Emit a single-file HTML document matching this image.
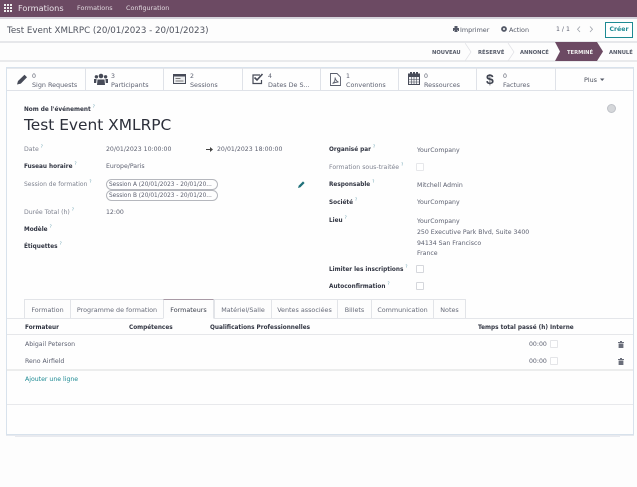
<!DOCTYPE html>
<html><head><meta charset="utf-8">
<style>
html,body{margin:0;padding:0;background:#fdfdfd;}
#r{position:relative;width:637px;height:487px;overflow:hidden;background:#fdfdfd;font-family:"DejaVu Sans","Liberation Sans",sans-serif;color:#4c5060;filter:blur(.35px);}
.t{position:absolute;white-space:nowrap;font-size:6.2px;line-height:10px;color:#5c6070;margin-top:1px;}
.t.n{margin-top:0;}
.b{font-weight:bold;color:#2f3340;font-size:5.75px;}
.g{color:#7f8390;}
.a{position:absolute;}
sup{font-size:4px;color:#6aa0b0;line-height:0;margin-left:2px;vertical-align:3px;font-weight:normal;}
.cb{position:absolute;width:6px;height:6px;border:1px solid #d5d7dc;background:#fff;border-radius:1px;}
.v{position:absolute;top:67px;width:1px;height:24px;background:#dfe2e8;}
.tab{position:absolute;top:299px;height:19px;border:1px solid #e2e4e8;border-bottom:none;box-sizing:border-box;font-size:6.4px;line-height:20px;text-align:center;color:#666a78;white-space:nowrap;background:#fdfdfd;}
</style></head><body><div id="r">
<!-- navbar -->
<div class="a" style="left:0;top:0;width:637px;height:17px;background:#6c4a63;"></div>
<div class="a" style="left:0;top:17px;width:637px;height:2px;background:#d6d4dc;"></div>
<svg class="a" style="left:4px;top:4px" width="8" height="8"><g fill="#eee"><rect x="0" y="0" width="2" height="2"/><rect x="3" y="0" width="2" height="2"/><rect x="6" y="0" width="2" height="2"/><rect x="0" y="3" width="2" height="2"/><rect x="3" y="3" width="2" height="2"/><rect x="6" y="3" width="2" height="2"/><rect x="0" y="6" width="2" height="2"/><rect x="3" y="6" width="2" height="2"/><rect x="6" y="6" width="2" height="2"/></g></svg>
<div class="t n" style="left:18px;top:2px;color:#e8e2e8;font-size:8.2px;line-height:12px;">Formations</div>
<div class="t n" style="left:77px;top:3px;color:#e0d8de;font-size:6.4px;">Formations</div>
<div class="t n" style="left:126px;top:3px;color:#e0d8de;font-size:6.4px;">Configuration</div>
<!-- control panel -->
<div class="t" style="left:7px;top:24px;font-size:8.7px;line-height:13px;color:#50545f;">Test Event XMLRPC (20/01/2023 - 20/01/2023)</div>
<div class="a" style="left:0;top:41px;width:637px;height:2px;background:#e6e7ea;"></div>
<svg class="a" style="left:453px;top:26px" width="6" height="6"><path d="M1.500 0h3v2h-3zM0 2h6v3H5V4H1v1H0zM1.500 4h3v2h-3z" fill="#555a68"/></svg>
<div class="t" style="left:460px;top:24px;color:#555a68;font-size:6.4px;">Imprimer</div>
<svg class="a" style="left:501px;top:26px" width="6" height="6"><circle cx="3" cy="3" r="2.900" fill="#555a68"/><circle cx="3" cy="3" r="1" fill="#fff"/></svg>
<div class="t" style="left:509px;top:24px;color:#555a68;font-size:6.4px;">Action</div>
<div class="t" style="left:556px;top:24px;">1 / 1</div>
<svg class="a" style="left:576px;top:26px" width="20" height="7" fill="none" stroke="#a0a4ac" stroke-width=".8"><path d="M4 .5L1.500 3.300 4 6M14 .5l2.500 2.800L14 6"/></svg>
<div class="a" style="left:605px;top:22px;width:28px;height:16px;border:1px solid #1d8a93;box-sizing:border-box;background:#fff;color:#1d8a93;font-size:6.200px;line-height:14px;text-align:center;font-weight:bold;">Créer</div>
<!-- statusbar -->
<div class="a" style="left:0;top:60px;width:637px;height:2px;background:#e9eaec;"></div>
<div class="t b" style="left:432px;top:47px;font-size:5.200px;color:#555a68;">NOUVEAU</div>
<div class="t b" style="left:478px;top:47px;font-size:5.200px;color:#555a68;">RÉSERVÉ</div>
<div class="t b" style="left:520px;top:47px;font-size:5.200px;color:#555a68;">ANNONCÉ</div>
<svg class="a" style="left:465px;top:43px" width="120" height="18" fill="none" stroke="#e0e1e5" stroke-width=".7"><path d="M0 0l6 9-6 9M43 0l6 9-6 9"/></svg>
<svg class="a" style="left:555px;top:42px" width="49" height="19"><path d="M0 0H42L48 9.500 42 19H0L5 9.500z" fill="#6c4a63"/></svg>
<div class="t b" style="left:567px;top:47px;font-size:5.200px;color:#eee;">TERMINÉ</div>
<div class="t b" style="left:609px;top:47px;font-size:5.200px;color:#555a68;">ANNULÉ</div>
<!-- sheet -->
<div class="a" style="left:6px;top:67px;width:628px;height:368px;border:1px solid #d8e2ec;box-sizing:border-box;background:#fefefe;box-shadow:0 1px 0 #e6e9ef;"></div>
<div class="a" style="left:15px;top:435px;width:605px;height:2px;background:#e8eaef;"></div>
<!-- stat buttons -->
<div class="a" style="left:7px;top:90px;width:626px;height:1px;background:#dfe2e8;"></div>
<div class="a" style="left:7px;top:68px;width:626px;height:1px;background:#e6e8ec;"></div>
<div class="v" style="left:85px"></div><div class="v" style="left:163px"></div><div class="v" style="left:242px"></div><div class="v" style="left:320px"></div><div class="v" style="left:398px"></div><div class="v" style="left:476px"></div><div class="v" style="left:555px"></div>
<svg class="a" style="left:17px;top:74px" width="11" height="11"><path d="M0 10.500L1 7 7.500 .8 10 3.200 3.800 9.600z" fill="#474b58"/></svg>
<svg class="a" style="left:94px;top:73px" width="14" height="13" fill="#474b58"><circle cx="7" cy="3" r="2.300"/><circle cx="2.400" cy="3.800" r="1.700"/><circle cx="11.600" cy="3.800" r="1.700"/><path d="M3.500 6.500h7l.5 5.500H3zM0 6h2.600L2.200 10H0zM11.400 6H14v4h-2.200z"/></svg>
<svg class="a" style="left:173px;top:74px" width="13" height="11"><rect x=".5" y=".5" width="12" height="9" fill="#eceef0" stroke="#474b58"/><rect x=".5" y=".5" width="12" height="2" fill="#474b58"/><rect x="2.500" y="4" width="5" height="1" fill="#777"/><rect x="2.500" y="6.500" width="8" height="1" fill="#777"/></svg>
<svg class="a" style="left:252px;top:73px" width="12" height="12" fill="none"><path d="M9.500 7v3.500h-8.500v-8.500h7" stroke="#474b58" stroke-width="1.200"/><path d="M2.500 4.500l2.500 2.500 5.500-6" stroke="#474b58" stroke-width="1.600"/></svg>
<svg class="a" style="left:330px;top:73px" width="11" height="13" fill="none" stroke="#5a5e6c" stroke-width=".9"><path d="M.5.500h6.500l3.500 3.500v8.500h-10z"/><path d="M2.500 10.500c2-1 3-4 2.500-6 .5 2.500 2 4 3.500 4.500-2 0-4 .5-6 1.500z"/></svg>
<svg class="a" style="left:408px;top:72px" width="12" height="13"><rect x=".5" y="2" width="11" height="10.500" fill="#f2f2f4" stroke="#474b58"/><rect x="0" y="2" width="12" height="3" fill="#474b58"/><rect x="2" y="0" width="2" height="3" fill="#474b58"/><rect x="5" y="0" width="2" height="3" fill="#474b58"/><rect x="8" y="0" width="2" height="3" fill="#474b58"/><path d="M3.500 5v7.500M6 5v7.500M8.500 5v7.500M1 7.500h10M1 10h10" stroke="#474b58" stroke-width=".6"/></svg>
<div class="t n" style="left:486px;top:71px;font-size:14px;line-height:16px;font-weight:bold;color:#3f4350;font-family:'Liberation Sans',sans-serif;">$</div>
<div class="t" style="left:32px;top:71px;">0</div><div class="t n" style="left:32px;top:80px;font-size:6.400px;">Sign Requests</div>
<div class="t" style="left:111px;top:71px;">3</div><div class="t n" style="left:111px;top:80px;font-size:6.400px;">Participants</div>
<div class="t" style="left:190px;top:71px;">2</div><div class="t n" style="left:190px;top:80px;font-size:6.400px;">Sessions</div>
<div class="t" style="left:268px;top:71px;">4</div><div class="t n" style="left:268px;top:80px;font-size:6.400px;">Dates De S...</div>
<div class="t" style="left:346px;top:71px;">1</div><div class="t n" style="left:346px;top:80px;font-size:6.400px;">Conventions</div>
<div class="t" style="left:424px;top:71px;">0</div><div class="t n" style="left:424px;top:80px;font-size:6.400px;">Ressources</div>
<div class="t" style="left:503px;top:71px;">0</div><div class="t n" style="left:503px;top:80px;font-size:6.400px;">Factures</div>
<div class="t n" style="left:584px;top:75px;font-size:6.400px;color:#484c58;">Plus</div>
<svg class="a" style="left:600px;top:78px" width="5" height="4"><path d="M0 .500h4.400L2.200 3z" fill="#555a68"/></svg>
<!-- title -->
<div class="t b" style="left:24px;top:104px;">Nom de l'événement<sup>?</sup></div>
<div class="t n" style="left:24px;top:115px;font-size:15.400px;line-height:21px;color:#2c2f3a;">Test Event XMLRPC</div>
<div class="a" style="left:607px;top:104px;width:9px;height:9px;border-radius:50%;background:#d5d7da;border:1px solid #bfc2c8;box-sizing:border-box;"></div>
<!-- left group -->
<div class="t g" style="left:24px;top:144px;">Date<sup>?</sup></div>
<div class="t" style="left:106px;top:144px;">20/01/2023 10:00:00</div>
<div class="a" style="left:206px;top:149px;width:6px;height:1px;background:#444;"></div>
<svg class="a" style="left:210px;top:147px" width="3" height="5"><path d="M0 0l3 2.500-3 2.500z" fill="#444"/></svg>
<div class="t" style="left:217px;top:144px;">20/01/2023 18:00:00</div>
<div class="t b" style="left:24px;top:161px;">Fuseau horaire<sup>?</sup></div>
<div class="t" style="left:106px;top:161px;">Europe/Paris</div>
<div class="t g" style="left:24px;top:179px;font-size:6px;">Session de formation<sup>?</sup></div>
<div class="a" style="left:106px;top:179px;width:112px;height:11px;border:1px solid #b5b7bd;border-radius:6px;box-sizing:border-box;"></div>
<div class="a" style="left:106px;top:190px;width:112px;height:11px;border:1px solid #b5b7bd;border-radius:6px;box-sizing:border-box;"></div>
<div class="t" style="left:109px;top:179px;font-size:5.800px;">Session A (20/01/2023 - 20/01/20...</div>
<div class="t" style="left:109px;top:190px;font-size:5.800px;">Session B (20/01/2023 - 20/01/20...</div>
<svg class="a" style="left:298px;top:181px" width="7" height="7"><path d="M0 7L.8 4.600 5 .4 6.600 2 2.400 6.200z" fill="#1f7079"/></svg>
<div class="t g" style="left:24px;top:207px;">Durée Total (h)<sup>?</sup></div>
<div class="t" style="left:106px;top:207px;">12:00</div>
<div class="t b" style="left:24px;top:224px;">Modèle<sup>?</sup></div>
<div class="t b" style="left:24px;top:241px;">Étiquettes<sup>?</sup></div>
<!-- right group -->
<div class="t b" style="left:329px;top:144px;">Organisé par<sup>?</sup></div>
<div class="t" style="left:417px;top:145px;">YourCompany</div>
<div class="t g" style="left:329px;top:162px;">Formation sous-traitée<sup>?</sup></div>
<div class="cb" style="left:416px;top:163px;border-color:#e6e7ea;"></div>
<div class="t b" style="left:329px;top:179px;">Responsable<sup>?</sup></div>
<div class="t" style="left:417px;top:180px;">Mitchell Admin</div>
<div class="t b" style="left:329px;top:197px;">Société<sup>?</sup></div>
<div class="t" style="left:417px;top:197px;">YourCompany</div>
<div class="t b" style="left:329px;top:215px;">Lieu<sup>?</sup></div>
<div class="t" style="left:417px;top:216px;">YourCompany</div>
<div class="t" style="left:417px;top:227px;">250 Executive Park Blvd, Suite 3400</div>
<div class="t" style="left:417px;top:238px;">94134 San Francisco</div>
<div class="t" style="left:417px;top:248px;">France</div>
<div class="t b" style="left:329px;top:264px;">Limiter les inscriptions<sup>?</sup></div>
<div class="cb" style="left:416px;top:265px;"></div>
<div class="t b" style="left:329px;top:281px;">Autoconfirmation<sup>?</sup></div>
<div class="cb" style="left:416px;top:282px;"></div>
<!-- tabs -->
<div class="a" style="left:7px;top:318px;width:626px;height:1px;background:#e4e6ea;"></div>
<div class="tab" style="left:24px;width:47px;">Formation</div>
<div class="tab" style="left:70px;width:94px;">Programme de formation</div>
<div class="tab" style="left:163px;width:51px;top:299px;height:20px;border-top:1px solid #a99aa6;border-bottom:1px solid #fefefe;color:#3a3e4a;">Formateurs</div>
<div class="tab" style="left:214px;width:58px;">Matériel/Salle</div>
<div class="tab" style="left:271px;width:67px;">Ventes associées</div>
<div class="tab" style="left:337px;width:35px;">Billets</div>
<div class="tab" style="left:371px;width:63px;">Communication</div>
<div class="tab" style="left:433px;width:33px;">Notes</div>
<!-- table -->
<div class="t b" style="left:25px;top:322px;">Formateur</div>
<div class="t b" style="left:129px;top:322px;">Compétences</div>
<div class="t b" style="left:210px;top:322px;">Qualifications Professionnelles</div>
<div class="t b" style="left:478px;top:322px;">Temps total passé (h)</div>
<div class="t b" style="left:550px;top:322px;">Interne</div>
<div class="a" style="left:7px;top:334px;width:626px;height:1px;background:#e6e7ea;"></div>
<div class="t" style="left:25px;top:339px;">Abigail Peterson</div>
<div class="t" style="left:529px;top:339px;">00:00</div>
<div class="cb" style="left:550px;top:340px;border-color:#e4e5e8;"></div>
<div class="t" style="left:25px;top:356px;">Reno Airfield</div>
<div class="t" style="left:529px;top:356px;">00:00</div>
<div class="cb" style="left:550px;top:357px;border-color:#e4e5e8;"></div>
<svg class="a" style="left:618px;top:341px" width="6" height="7"><path d="M2 0h2v1h2v1H0V1h2zM.6 2.500h4.800V7H.6z" fill="#6a6e7a"/></svg>
<svg class="a" style="left:618px;top:358px" width="6" height="7"><path d="M2 0h2v1h2v1H0V1h2zM.6 2.500h4.800V7H.6z" fill="#6a6e7a"/></svg>
<div class="a" style="left:7px;top:369px;width:626px;height:2px;background:#eceded;"></div>
<div class="t" style="left:25px;top:374px;color:#1d8a93;">Ajouter une ligne</div>
<div class="a" style="left:7px;top:404px;width:626px;height:1px;background:#e8e9ec;"></div>
</div></body></html>
